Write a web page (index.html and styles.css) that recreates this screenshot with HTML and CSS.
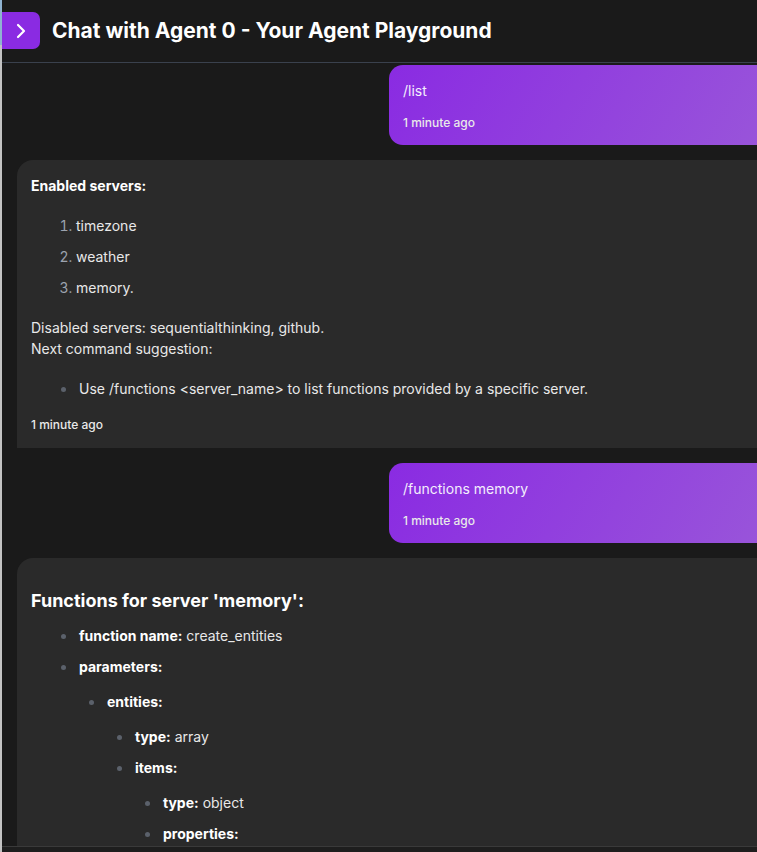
FILE: index.html
```html
<!DOCTYPE html>
<html lang="en">
<head>
<meta charset="utf-8">
<title>Chat with Agent 0</title>
<link rel="stylesheet" href="styles.css">
</head>
<body>
<div class="app">
  <div class="edge"></div>
  <div class="main">
    <header class="topbar">
      <button class="toggle" aria-label="Toggle sidebar">
        <svg width="24" height="24" viewBox="0 0 24 24" fill="none" stroke="#fff" stroke-width="2.2" stroke-linecap="round" stroke-linejoin="round"><path d="M9 6l6 6-6 6"/></svg>
      </button>
      <h1 class="title">Chat with Agent 0 - Your Agent Playground</h1>
    </header>
    <section class="messages">
      <div class="msg user">
        <div class="msg-text">/list</div>
        <div class="time">1 minute ago</div>
      </div>
      <div class="msg bot">
        <div class="md">
          <p><strong>Enabled servers:</strong></p>
          <ol>
            <li>timezone</li>
            <li>weather</li>
            <li>memory.</li>
          </ol>
          <p>Disabled servers: sequentialthinking, github.<br>Next command suggestion:</p>
          <ul>
            <li>Use /functions &lt;server_name&gt; to list functions provided by a specific server.</li>
          </ul>
        </div>
        <div class="time">1 minute ago</div>
      </div>
      <div class="msg user">
        <div class="msg-text">/functions memory</div>
        <div class="time">1 minute ago</div>
      </div>
      <div class="msg bot">
        <div class="md">
          <h3>Functions for server 'memory':</h3>
          <ul>
            <li><strong>function name:</strong> create_entities</li>
            <li><strong>parameters:</strong>
              <ul>
                <li><strong>entities:</strong>
                  <ul>
                    <li><strong>type:</strong> array</li>
                    <li><strong>items:</strong>
                      <ul>
                        <li><strong>type:</strong> object</li>
                        <li><strong>properties:</strong></li>
                      </ul>
                    </li>
                  </ul>
                </li>
              </ul>
            </li>
          </ul>
        </div>
      </div>
    </section>
    <footer class="composer"></footer>
  </div>
</div>
</body>
</html>
```

FILE: styles.css
```css
* { box-sizing: border-box; }
html, body { margin: 0; padding: 0; }
body {
  background: #1a1a1a;
  font-family: Inter, "Noto Sans", "Liberation Sans", sans-serif;
  color: #e8e8e8;
  font-size: 14px;
  line-height: 21px;
}
.app {
  display: flex;
  height: 852px;
  overflow: hidden;
}
.edge {
  width: 2px;
  flex: none;
  background: linear-gradient(to bottom, #8fb3d1 0, #8fb3d1 45px, #c3c3c3 45px, #c3c3c3 100%);
}
.main {
  flex: 1;
  display: flex;
  flex-direction: column;
  min-width: 0;
  overflow: hidden;
}
.topbar {
  height: 63px;
  flex: none;
  display: flex;
  align-items: center;
  border-bottom: 1px solid #3a414d;
  background: #1a1a1a;
  padding-bottom: 1px;
}
.toggle {
  width: 38px;
  height: 37px;
  border: 0;
  padding: 0;
  margin: 0;
  background: #8a2be2;
  border-radius: 0 7px 7px 0;
  display: flex;
  align-items: center;
  justify-content: center;
}
.toggle svg { display: block; }
.title {
  margin: 0 0 0 12px;
  font-size: 21px;
  font-weight: 700;
  color: #ffffff;
  line-height: 28px;
  letter-spacing: 0;
}
.messages {
  height: 783px;
  flex: none;
  overflow: hidden;
  padding: 2px 0 0 15px;
  display: flex;
  flex-direction: column;
  gap: 15px;
}
.msg {
  flex: none;
  margin-right: -40px;
}
.msg.user {
  margin-left: 372px;
  background: linear-gradient(120deg, #8a2be2 0%, #9a58d9 100%);
  border-radius: 14px 0 0 14px;
  padding: 15px 14px 14px;
  color: #f3eefc;
}
.msg.user .msg-text { line-height: 21px; }
.msg.user .time { margin-top: 14px; }
.msg.bot {
  background: #2a2a2a;
  border-radius: 16px 0 0 0;
  padding: 15px 14px 15px;
}
.time {
  font-size: 12px;
  line-height: 16px;
  font-weight: 500;
  color: #e9e9e9;
}
.msg.bot .time { margin-top: 13px; }
.md p { margin: 0; }
.md strong { color: #ffffff; font-weight: 700; }
.md ol {
  margin: 14px 0;
  padding-left: 45px;
}
.md ol li::marker { color: #9ca3af; }
.md ul {
  margin: 14px 0;
  padding-left: 48px;
  list-style: none;
}
.md ul ul {
  margin: 9px 0 0;
  padding-left: 28px;
}
.md li { padding: 5px 0; }
.md ul li::before {
  content: "";
  display: inline-block;
  width: 5px;
  height: 5px;
  border-radius: 50%;
  background: #5b616b;
  margin-left: -18px;
  margin-right: 13px;
  vertical-align: middle;
  position: relative;
  top: -1px;
}
.md > :last-child { margin-bottom: 0; }
.md h3 {
  margin: 15px 0 0;
  font-size: 18px;
  line-height: 26px;
  font-weight: 700;
  color: #ffffff;
}
.md h3 + ul { margin-top: 6px; }
.composer {
  flex: 1;
  border-top: 1px solid #3a3a3a;
  background: #1e1e1e;
}
```
